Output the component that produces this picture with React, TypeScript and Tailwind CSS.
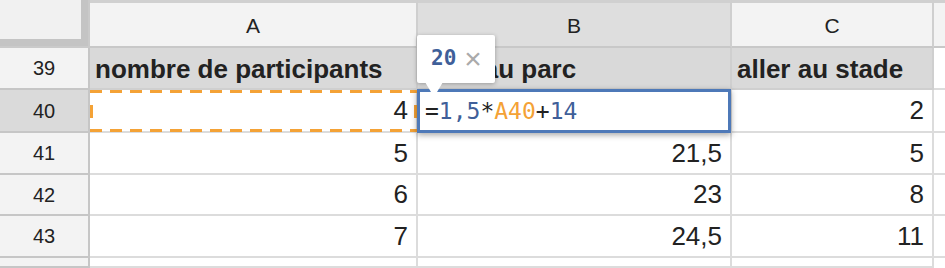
const rows = [
  { n: 41, a: '5', b: '21,5', c: '5' },
  { n: 42, a: '6', b: '23', c: '8' },
  { n: 43, a: '7', b: '24,5', c: '11' },
];

function ColHead({ label, active }: { label: string; active?: boolean }) {
  return (
    <div
      className={`flex items-center justify-center border-t-[3px] border-t-[#d0d0d0] border-r-2 border-r-[#cfcfcf] border-b-2 border-b-[#c8c8c8] pt-[2px] text-[21px] ${
        active ? 'bg-[#dedede]' : 'bg-[#f3f3f3]'
      }`}
    >
      {label}
    </div>
  );
}

function RowHead({ n, active }: { n: number | string; active?: boolean }) {
  return (
    <div
      className={`flex items-center justify-center border-r-2 border-b-2 border-[#c6c6c6] text-[20px] ${
        active ? 'bg-[#dadada]' : 'bg-[#f3f3f3]'
      }`}
    >
      {n}
    </div>
  );
}

function Cell({ value }: { value?: string }) {
  return (
    <div className="flex items-center justify-end border-r-2 border-b-2 border-[#dcdcdc] pr-[8px] text-[26px]">
      {value}
    </div>
  );
}

function TitleCell({ value }: { value?: string }) {
  return (
    <div className="flex items-center overflow-hidden whitespace-nowrap border-r-2 border-b-2 border-[#cfcfcf] bg-[#d9d9d9] pl-[5px] pt-[3px] text-[26px] font-bold">
      {value}
    </div>
  );
}

export default function App() {
  return (
    <div className="h-[268px] w-[945px] overflow-hidden bg-white font-['Liberation_Sans',Arial,sans-serif] text-[#222]">
      <div className="grid grid-cols-[90px_328px_314px_202px_1fr] grid-rows-[48px_42px_43px_42px_41px_42px_10px]">
        {/* corner */}
        <div className="border-r-2 border-b-2 border-[#cacaca] bg-[#f3f3f3]">
          <div className="h-[46px] w-[88px] border-r-[7px] border-b-[7px] border-[#c4c4c4] bg-[#f1f1f1]" />
        </div>
        <ColHead label="A" />
        <ColHead label="B" active />
        <ColHead label="C" />
        <div className="border-t-[3px] border-t-[#d0d0d0] border-b-2 border-b-[#c8c8c8] bg-[#f3f3f3]" />

        {/* row 39 */}
        <RowHead n={39} />
        <TitleCell value="nombre de participants" />
        <TitleCell value="aller au parc" />
        <TitleCell value="aller au stade" />
        <div className="border-b-2 border-[#dcdcdc]" />

        {/* row 40 */}
        <RowHead n={40} active />
        <div className="relative flex items-center justify-end border-r-2 border-b-2 border-[#dcdcdc] pr-[8px] text-[26px]">
          4
          {/* copy marquee */}
          <div className="pointer-events-none absolute left-0 top-0 h-[3px] w-[328px] bg-[repeating-linear-gradient(90deg,#f4a236_0_12px,transparent_12px_20px)]" />
          <div className="pointer-events-none absolute bottom-[-1px] left-0 h-[3px] w-[328px] bg-[repeating-linear-gradient(90deg,#f4a236_0_12px,transparent_12px_20px)]" />
          <div className="pointer-events-none absolute left-0 top-[15px] h-[13px] w-[3px] bg-[#f4a236]" />
          <div className="pointer-events-none absolute right-[-1px] top-[15px] h-[13px] w-[3px] bg-[#f4a236]" />
        </div>
        <div className="relative border-r-2 border-b-2 border-[#dcdcdc]">
          {/* editor */}
          <div className="absolute left-[-1px] top-[-1px] z-10 flex h-[44px] w-[314px] items-center border-[3px] border-[#4e79b8] bg-white pl-[5px] font-['DejaVu_Sans_Mono',monospace] text-[23px] shadow-[0_2px_6px_rgba(0,0,0,0.35)]">
            <span>=</span>
            <span className="text-[#3f5f99]">1,5</span>
            <span>*</span>
            <span className="text-[#f4a236]">A40</span>
            <span>+</span>
            <span className="text-[#3f5f99]">14</span>
          </div>
          {/* value tooltip */}
          <div className="absolute left-[-1px] top-[-55px] z-20 flex h-[48px] w-[78px] items-center gap-[8px] rounded-[2px] bg-white pl-[14px] shadow-[0_1px_4px_rgba(0,0,0,0.3)]">
            <span className="font-['DejaVu_Sans_Mono',monospace] text-[21px] font-bold text-[#3f5f99]">20</span>
            <span className="text-[30px] leading-none text-[#aaaaaa]">×</span>
          </div>
          <svg className="absolute left-[7px] top-[-8px] z-20" width="18" height="15" viewBox="0 0 18 15">
            <polygon points="0,0 18,0 9,15" fill="#ffffff" />
          </svg>
        </div>
        <Cell value="2" />
        <div className="border-b-2 border-[#dcdcdc]" />

        {rows.map((r) => (
          <div key={r.n} className="contents">
            <RowHead n={r.n} />
            <Cell value={r.a} />
            <Cell value={r.b} />
            <Cell value={r.c} />
            <div className="border-b-2 border-[#dcdcdc]" />
          </div>
        ))}

        <RowHead n="" />
        <Cell />
        <Cell />
        <Cell />
        <div />
      </div>
    </div>
  );
}
